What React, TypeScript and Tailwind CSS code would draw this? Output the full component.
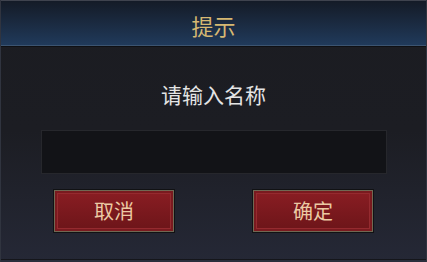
export default function App() {
  return (
    <div
      className="flex h-[262px] w-[427px] flex-col overflow-hidden border-x border-[#30343f] bg-gradient-to-b from-[#1b1c21] via-[#1c1d23] to-[#252836]"
      style={{ fontFamily: '"Noto Sans CJK SC", "Noto Sans", sans-serif' }}
    >
      {/* title bar */}
      <div className="flex h-[46px] shrink-0 items-center justify-center border-t border-b border-t-[#3f434e] border-b-[#3c5470] bg-gradient-to-b from-[#141b27] to-[#203a5b] pt-[3px]">
        <span className="text-[22px] leading-none text-[#d6b872]">提示</span>
      </div>
      <div className="h-px shrink-0 bg-[#0f1014]" />

      {/* body */}
      <div className="flex flex-1 flex-col items-center">
        <p className="mt-[32px] text-[21px] leading-[30px] text-[#e4e4e4]">请输入名称</p>
        <div className="mt-[21px] h-[44px] w-[346px] border border-[#26272c] bg-[#121317]" />
        <div className="mt-[15px] flex gap-[77px]">
          <DialogButton label="取消" />
          <DialogButton label="确定" />
        </div>
      </div>
      <div className="h-px shrink-0 bg-[#15161b]" />
      <div className="h-[2px] shrink-0 bg-[#2a2e3c]" />
    </div>
  );
}

function DialogButton({ label }: { label: string }) {
  return (
    <button className="h-[44px] w-[122px] border border-[#111214] p-0">
      <div className="flex h-full w-full items-center justify-center border border-[#706853] bg-gradient-to-b from-[#8a1d23] to-[#6c1519] shadow-[inset_0_0_0_2px_#7a1a1f,inset_0_0_0_3px_#952a2f]">
        <span className="text-[20px] leading-none text-[#eccaa4]">{label}</span>
      </div>
    </button>
  );
}
